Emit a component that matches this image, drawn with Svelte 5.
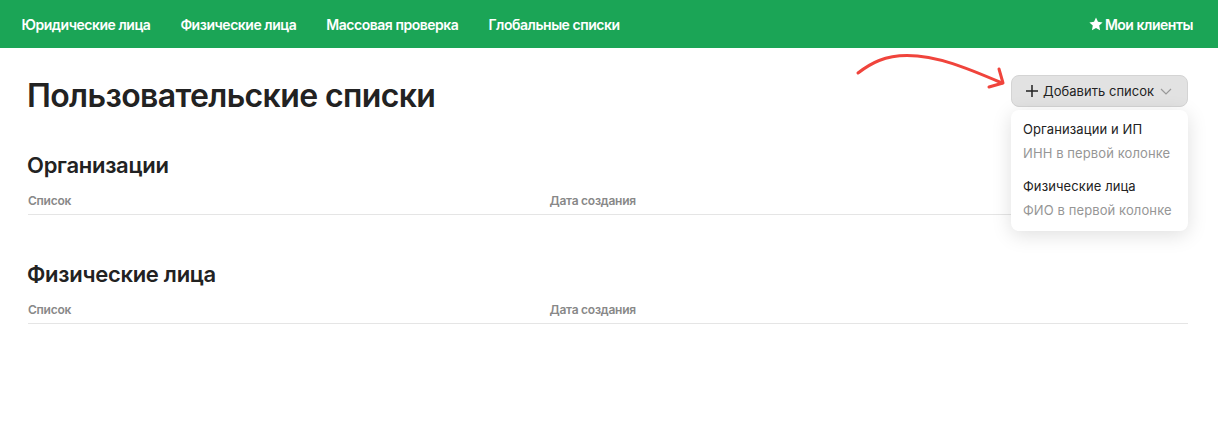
<script>
  const navItems = ['Юридические лица', 'Физические лица', 'Массовая проверка', 'Глобальные списки'];
  const sections = ['Организации', 'Физические лица'];
  const menu = [
    { title: 'Организации и ИП', hint: 'ИНН в первой колонке' },
    { title: 'Физические лица', hint: 'ФИО в первой колонке' }
  ];
</script>

<nav class="nav">
  <div class="links">
    {#each navItems as item}
      <span>{item}</span>
    {/each}
  </div>
  <div class="clients">
    <svg width="14" height="14" viewBox="0 0 24 24"><path fill="#fff" d="M12 1l3.4 7.3 7.9 1-5.8 5.4 1.5 7.9L12 18.7l-7 3.9 1.5-7.9L.7 9.3l7.9-1z"/></svg>
    <span>Мои клиенты</span>
  </div>
</nav>

<main class="main">
  <header class="head">
    <h1>Пользовательские списки</h1>
    <div class="add">
      <svg class="arrow" width="152" height="44" viewBox="0 0 152 44" fill="none">
        <path d="M3 21C16 11 30 3.500 52 3.500C82 3.500 112 16 147 31" stroke="#f0443c" stroke-width="3" stroke-linecap="round"/>
        <path d="M144 17L148 31L134 35" stroke="#f0443c" stroke-width="3" stroke-linecap="round" stroke-linejoin="round"/>
      </svg>
      <button class="btn">
        <svg width="14" height="14" viewBox="0 0 14 14"><path d="M7 1v12M1 7h12" stroke="#222" stroke-width="1.5"/></svg>
        <span>Добавить список</span>
        <svg width="12" height="7" viewBox="0 0 12 7" fill="none"><path d="M1 1l5 5 5-5" stroke="#999" stroke-width="1.2"/></svg>
      </button>
      <div class="menu">
        {#each menu as m}
          <div class="item">
            <div class="t">{m.title}</div>
            <div class="h">{m.hint}</div>
          </div>
        {/each}
      </div>
    </div>
  </header>

  {#each sections as s}
    <section>
      <h2>{s}</h2>
      <div class="cols">
        <span>Список</span>
        <span>Дата создания</span>
      </div>
    </section>
  {/each}
</main>

<style>
  :global(body) {
    margin: 0;
    background: #fff;
    font-family: Inter, "Noto Sans", sans-serif;
    color: #222;
  }
  .nav {
    height: 48px;
    background: #1ba556;
    display: flex;
    align-items: center;
    justify-content: space-between;
    padding: 0 25px 0 21.5px;
    color: #fff;
    font-size: 14px;
    font-weight: 600;
    letter-spacing: -0.47px;
  }
  .links {
    display: flex;
    gap: 30px;
  }
  .clients {
    display: flex;
    align-items: center;
    gap: 2px;
  }
  .main {
    padding: 0 30px 0 28px;
  }
  .head {
    display: flex;
    justify-content: space-between;
    align-items: flex-start;
    height: 96px;
  }
  h1 {
    margin: 27.5px 0 0 -1px;
    font-size: 32px;
    line-height: 40px;
    font-weight: 600;
    letter-spacing: -0.62px;
    color: #222;
  }
  .add {
    position: relative;
    margin-top: 27px;
    width: 177px;
  }
  .arrow {
    position: absolute;
    left: -156px;
    top: -23px;
  }
  .btn {
    width: 177px;
    height: 32px;
    box-sizing: border-box;
    border: 1px solid #d4d4d4;
    border-radius: 8px;
    background: #e2e2e2;
    display: flex;
    align-items: center;
    justify-content: flex-start;
    gap: 5px;
    padding: 0 0 0 13px;
    font: inherit;
    font-size: 13px;
    letter-spacing: 0.03px;
    color: #222;
  }
  .btn span {
    margin: 0 1px 0 -1px;
  }
  .menu {
    position: absolute;
    top: 35px;
    left: 0;
    width: 177px;
    height: 121px;
    box-sizing: border-box;
    padding: 9px 12px;
    background: #fff;
    border-radius: 8px;
    box-shadow: 0 4px 20px rgba(0, 0, 0, 0.13);
    font-size: 13px;
    letter-spacing: 0.1px;
    display: flex;
    flex-direction: column;
    gap: 13px;
  }
  .t {
    line-height: 20px;
    margin-bottom: 4px;
  }
  .h {
    line-height: 20px;
    color: #969696;
  }
  section {
    height: 109px;
  }
  h2 {
    margin: 0 0 0 -1px;
    font-size: 22px;
    line-height: 28px;
    font-weight: 600;
    letter-spacing: -0.28px;
    padding-top: 7px;
    color: #222;
  }
  .cols {
    margin-top: 12px;
    height: 23px;
    border-bottom: 1px solid #e5e5e5;
    display: grid;
    grid-template-columns: 521.5px 1fr;
    font-size: 12px;
    line-height: 20px;
    font-weight: 600;
    color: #888;
    letter-spacing: -0.25px;
  }
</style>
